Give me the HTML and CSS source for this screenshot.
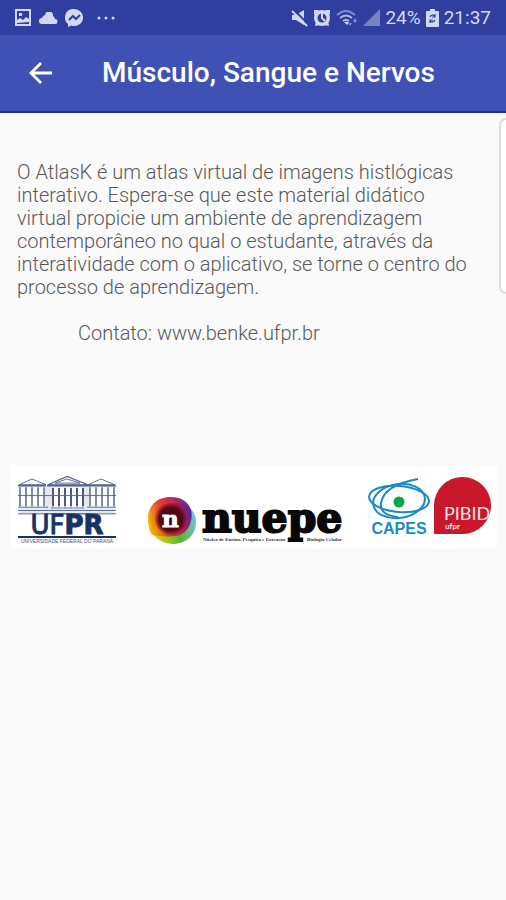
FILE: index.html
```html
<!DOCTYPE html>
<html lang="pt-BR">
<head>
<meta charset="utf-8">
<meta name="viewport" content="width=device-width, initial-scale=1">
<title>Músculo, Sangue e Nervos</title>
<link rel="stylesheet" href="styles.css">
</head>
<body>
<div class="status">
  <div class="status-left">
    <svg width="18" height="18" viewBox="0 0 18 18"><path fill="currentColor" fill-rule="evenodd" d="M1 0h16v17H1zM3 2v9l3-2 3 2 3-3 3 2V2zM5 4h3v3H5zM3 14v1h12v-2z"/></svg>
    <svg width="19" height="12" viewBox="0 0 19 12"><path fill="currentColor" d="M3 12a3 3 0 0 1 0-6 4 4 0 0 1 3-3 4 4 0 0 1 8 1 4 4 0 0 1 2 3 2.500 2.500 0 0 1 0 5z"/></svg>
    <svg width="18" height="18" viewBox="0 0 18 18"><path fill="currentColor" d="M9 0a9 8.500 0 1 1-3 16.500L3 18v-3A8.500 8.500 0 0 1 9 0z"/><path fill="none" stroke="#303f9f" stroke-width="2" d="M4 11l4-4 3 3 4-4"/></svg>
    <svg class="dots" width="18" height="4" viewBox="0 0 18 4"><g fill="currentColor"><circle cx="2" cy="2" r="1.500"/><circle cx="9" cy="2" r="1.500"/><circle cx="16" cy="2" r="1.500"/></g></svg>
  </div>
  <div class="status-right">
    <svg width="17" height="18" viewBox="0 0 17 18"><path fill="currentColor" d="M1 6h4l8-5v15l-8-5H1z"/><path stroke="#303f9f" stroke-width="2" d="M2 0l15 15"/><path stroke="currentColor" stroke-width="2" d="M1 2l15 15"/></svg>
    <svg width="18" height="18" viewBox="0 0 18 18"><g fill="currentColor"><circle cx="9" cy="9" r="8"/><path d="M1 6V1h5zM17 6V1h-5zM2 17l1-5 4 4zM16 17l-1-5-4 4z"/></g><circle cx="9" cy="9" r="4.500" fill="#303f9f"/><path fill="none" stroke="currentColor" stroke-width="2" d="M9 4v5l3 3"/></svg>
    <svg width="22" height="18" viewBox="0 0 22 18"><g fill="none" stroke="currentColor" stroke-width="1.800"><path opacity=".5" d="M1 6q9-8 18 0"/><path opacity=".8" d="M4 9q6-5 12 0M7 12q3-2 6 0"/></g><path fill="currentColor" d="M8 13h5l-2 3z"/><path fill="currentColor" opacity=".5" d="M12 14h4l-2 3zM17 12l2-3 2 3-2 2z"/></svg>
    <svg width="17" height="17" viewBox="0 0 17 17"><path fill="currentColor" opacity=".45" d="M17 0v17H0z"/></svg>
    <span>24%</span>
    <svg width="13" height="18" viewBox="0 0 13 18"><path fill="currentColor" d="M4 0h5v2h3q1 0 1 1v14q0 1-1 1H1q-1 0-1-1V3q0-1 1-1h3z"/><path fill="none" stroke="#303f9f" stroke-width="1.200" d="M4 8a3 3 0 0 1 5-1M9 5v3H6M9 11a3 3 0 0 1-5 1M4 14v-3h3"/></svg>
    <span>21:37</span>
  </div>
</div>
<header class="bar">
  <button class="back" type="button" aria-label="Voltar">
    <svg width="24" height="24" viewBox="0 0 24 24"><path fill="none" stroke="currentColor" stroke-width="2.800" d="M24 12H3M13 2L3 12l10 10"/></svg>
  </button>
  <h1 class="title">Músculo, Sangue e Nervos</h1>
</header>
<main class="content">
  <p class="about">O AtlasK é um atlas virtual de imagens histlógicas interativo. Espera-se que este material didático virtual propicie um ambiente de aprendizagem contemporâneo no qual o estudante, através da interatividade com o aplicativo, se torne o centro do processo de aprendizagem.</p>
  <p class="contact">Contato: www.benke.ufpr.br</p>
  <div class="edge-card"></div>
  <svg class="logos" viewBox="0 0 486 83" role="img" aria-label="UFPR, Nuepe, CAPES, PIBID">
    <defs>
      <linearGradient id="warm" x1="0" y1=".6" x2="1" y2=".3"><stop offset="0" stop-color="#f5b000"/><stop offset=".35" stop-color="#e0301e"/><stop offset=".7" stop-color="#b0124e"/><stop offset="1" stop-color="#4b1a9c"/></linearGradient>
      <linearGradient id="cool" x1="0" y1=".7" x2="1" y2=".3"><stop offset="0" stop-color="#e8d800"/><stop offset=".5" stop-color="#5cb531"/><stop offset="1" stop-color="#6fc4f0"/></linearGradient>
      <radialGradient id="core"><stop offset="0" stop-color="#3c0410"/><stop offset=".75" stop-color="#5a0818"/><stop offset="1" stop-color="#8a1030" stop-opacity=".3"/></radialGradient>
    </defs>
    <!-- UFPR -->
    <g fill="none" stroke="#53658c" transform="translate(0 4) scale(1 .83)">
      <path fill="#e4e9f0" stroke="none" d="M8 20h96v34H8z"/>
      <path fill="#fff" d="M8 19L21 12l14 7zM77 19l13-7 14 7z"/>
      <path fill="#fff" stroke-width="1.300" d="M37 19l19-10 21 10z"/>
      <path stroke-width="2" d="M7 20h28M36 20h42M77 20h28"/>
      <path d="M44 17l12-5 13 5z"/>
      <path stroke="#fff" stroke-width="4" d="M12 22v24M18 22v24M24 22v24M30 22v24M45 22v26M51 22v26M57 22v26M63 22v26M69 22v26M82 22v24M88 22v24M94 22v24M100 22v24"/>
      <path stroke-width="1.400" d="M9 22v23M15 22v23M21 22v23M27 22v23M33 22v23M79 22v23M85 22v23M91 22v23M97 22v23M103 22v23"/>
      <path stroke="#233963" stroke-width="1.600" d="M42 23v22M48 23v22M54 23v22M60 23v22M66 23v22M72 23v22"/>
      <path stroke-width="1" d="M7 32h98M7 46h30M76 46h29M7 50h30M76 50h29M40 47h33M37 50h40M35 54h44M7 54h98"/>
    </g>
    <text class="ufpr" x="56" y="69">UF<tspan class="heavy">PR</tspan></text>
    <path fill="#173366" d="M7 71h98v2H7z"/>
    <text class="ufpr-sub" x="56" y="78">UNIVERSIDADE FEDERAL DO PARANÁ</text>
    <!-- Nuepe -->
    <path fill="url(#cool)" d="M139 58c1-12 11-20 23-20 14 0 23 7 23 19 0 13-10 22-24 22-13-1-22-9-22-21z"/>
    <path fill="url(#warm)" d="M137 53c0-12 9-21 22-21 11 0 18 4 21 13 3 12-4 25-16 26-9 1-14 0-23-1-3-4-4-11-4-17z" opacity=".92"/>
    <circle cx="160" cy="54" r="16" fill="url(#core)"/>
    <text class="nuepe-n" x="151" y="62">n</text>
    <text class="nuepe" x="191" y="67">nuepe</text>
    <text class="nuepe-sub" x="192" y="76">Núcleo de Ensino, Pesquisa e Extensão</text>
    <text class="nuepe-sub" x="296" y="76">Biologia Celular</text>
    <!-- CAPES -->
    <g fill="none" stroke="#168bc8" stroke-width="2">
      <ellipse cx="388" cy="34" rx="30" ry="13" transform="rotate(5 388 34)"/>
      <ellipse cx="388" cy="36" rx="26" ry="17" transform="rotate(-8 388 36)"/>
      <path d="M407 14Q373 20 370 38q-2 12 17 14"/>
    </g>
    <circle cx="388" cy="37" r="5.500" fill="#08a64a"/>
    <text class="capes" x="388" y="69">CAPES</text>
    <!-- PIBID -->
    <path fill="#c9182c" d="M423 69V40a28.500 28.500 0 1 1 29 29z"/>
    <text class="pibid" x="433" y="55">PIBID</text>
    <text class="pibid-sub" x="434" y="64">ufpr</text>
  </svg>
</main>
</body>
</html>
```
FILE: styles.css
```css
* {
  box-sizing: border-box;
}

body {
  margin: 0;
  min-height: 100vh;
  background: #fafafa;
  font-family: Roboto, "Liberation Sans", sans-serif;
  overflow-x: hidden;
}

.status {
  display: flex;
  justify-content: space-between;
  align-items: center;
  height: 35px;
  padding: 0 15px 0 14px;
  background: #303f9f;
  color: #d3d8f2;
  font-size: 19px;
}

.status-left,
.status-right {
  display: flex;
  align-items: center;
  gap: 5px;
}

.status-left {
  gap: 7px;
}

.dots {
  margin-left: 7px;
}

.bar {
  display: flex;
  align-items: center;
  height: 78px;
  padding: 0 28px;
  background: #3f51b5;
  border-bottom: 2px solid #1c2f9c;
  color: #fff;
}

.back {
  display: flex;
  padding: 0;
  border: 0;
  background: none;
  color: inherit;
}

.title {
  margin: 0 0 0 50px;
  font-size: 28px;
  font-weight: 500;
  line-height: 32px;
  white-space: nowrap;
}

.content {
  position: relative;
  padding-top: 48px;
  color: #585858;
  font-size: 20px;
  font-weight: 300;
  line-height: 23px;
}

.about {
  margin: 0;
  padding: 0 32px 0 17px;
}

.contact {
  margin: 23px 0 0;
  padding-left: 78px;
}

.edge-card {
  position: absolute;
  top: 5px;
  right: 0;
  width: 7px;
  height: 176px;
  border: 2px solid #dcdce0;
  border-right: 0;
  border-radius: 8px 0 0 8px;
  background: #fff;
}

.logos {
  display: block;
  width: calc(100% - 20px);
  margin: 120px 9px 0 11px;
  background: #fff;
}

.ufpr {
  font: 26px "DejaVu Sans", sans-serif;
  fill: #173366;
  stroke: #173366;
  stroke-width: 1px;
  text-anchor: middle;
}

.heavy {
  font-weight: 700;
}

.ufpr-sub {
  font: 5px "Liberation Sans", sans-serif;
  fill: #40547e;
  text-anchor: middle;
}

.nuepe,
.nuepe-n {
  font: 700 41px "DejaVu Serif", serif;
  fill: #080808;
  stroke: #080808;
  stroke-width: 2px;
}

.nuepe-n {
  font-size: 23px;
  fill: #fff;
  stroke: #fff;
  stroke-width: 1px;
}

.nuepe-sub {
  font: 700 5px "Liberation Serif", serif;
  fill: #333;
}

.capes {
  font: 700 16px "Liberation Sans", sans-serif;
  fill: #168bc8;
  text-anchor: middle;
}

.pibid {
  font: 18px Lato, sans-serif;
  fill: #fbe3e5;
}

.pibid-sub {
  font: 700 8px Lato, sans-serif;
  fill: #fbe3e5;
}
```
